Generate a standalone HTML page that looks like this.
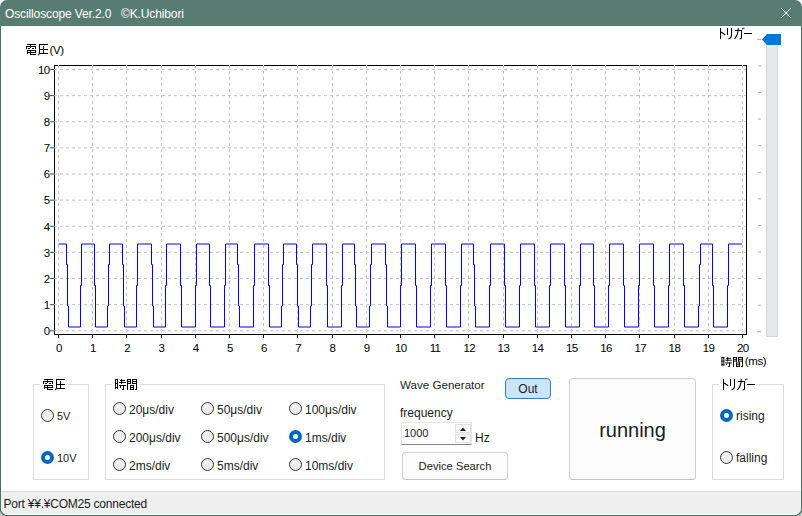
<!DOCTYPE html>
<html><head><meta charset="utf-8">
<style>
*{margin:0;padding:0;box-sizing:border-box}
html,body{width:802px;height:516px;overflow:hidden;background:#fff}
body{position:relative;font-family:"Liberation Sans", sans-serif;font-size:12px;color:#1c1c1c}
.abs{position:absolute}
.txt{position:absolute;white-space:pre;line-height:14px;height:14px}
#win{position:absolute;left:0;top:0;width:802px;height:516px;background:#587c71;border-radius:7px}
#client{position:absolute;left:1px;top:26px;width:800px;height:489px;background:#fff;border-radius:0 0 7px 7px;overflow:hidden}
#status{position:absolute;left:0;top:465px;width:800px;height:24px;background:#efefef;border-top:1px solid #dadada;border-bottom:1px solid #f8f8f8}
.gb{position:absolute;border:1px solid #dcdcdc}
.radio{position:absolute;width:13px;height:13px;border-radius:50%;border:1px solid #333;background:#efefef}
.radio.on{border:none;background:#0067c0}
.radio.on::after{content:"";position:absolute;left:4px;top:4px;width:5px;height:5px;border-radius:50%;background:#fff}
.btn{position:absolute;border:1px solid #d0d0d0;border-bottom-color:#c0c0c0;border-radius:4px;background:#fdfdfd}
</style></head><body>
<div class="abs" style="left:0;top:500px;width:16px;height:16px;background:#c8c8c8"></div>
<div class="abs" style="left:786px;top:500px;width:16px;height:16px;background:#c8c8c8"></div>
<div id="win">
  <div class="txt" style="left:5px;top:6.5px;color:#fff;font-size:12px;letter-spacing:-0.12px">Oscilloscope Ver.2.0   ©K.Uchibori</div>
</div>
<div class="abs" style="left:0;top:26px;width:802px;height:490px;background:#4b7365;border-radius:0 0 7px 7px"></div>
<div id="client">
  <div id="status"><div class="txt" style="left:2.5px;top:5px;font-size:12px;letter-spacing:-0.22px">Port ¥¥.¥COM25 connected</div></div>
</div>

<div class="gb" style="left:33px;top:384px;width:56px;height:96px"></div>
<div class="gb" style="left:105px;top:384px;width:280px;height:96px"></div>
<div class="gb" style="left:712px;top:384px;width:72px;height:96px"></div>
<div class="abs" style="left:40px;top:380px;width:28px;height:10px;background:#fff"></div>
<div class="abs" style="left:112px;top:380px;width:28px;height:10px;background:#fff"></div>
<div class="abs" style="left:719px;top:380px;width:38px;height:10px;background:#fff"></div>

<div class="radio" style="left:41px;top:409px"></div><div class="txt" style="left:57px;top:409px;font-size:11px">5V</div>
<div class="radio on" style="left:41px;top:451px"></div><div class="txt" style="left:57px;top:451px;font-size:11px">10V</div>

<div class="radio" style="left:113px;top:402px"></div><div class="txt" style="left:129px;top:403px">20μs/div</div>
<div class="radio" style="left:113px;top:430px"></div><div class="txt" style="left:129px;top:431px">200μs/div</div>
<div class="radio" style="left:113px;top:458px"></div><div class="txt" style="left:129px;top:459px">2ms/div</div>
<div class="radio" style="left:201px;top:402px"></div><div class="txt" style="left:217px;top:403px">50μs/div</div>
<div class="radio" style="left:201px;top:430px"></div><div class="txt" style="left:217px;top:431px">500μs/div</div>
<div class="radio" style="left:201px;top:458px"></div><div class="txt" style="left:217px;top:459px">5ms/div</div>
<div class="radio" style="left:289px;top:402px"></div><div class="txt" style="left:305px;top:403px">100μs/div</div>
<div class="radio on" style="left:289px;top:430px"></div><div class="txt" style="left:305px;top:431px">1ms/div</div>
<div class="radio" style="left:289px;top:458px"></div><div class="txt" style="left:305px;top:459px">10ms/div</div>

<div class="radio on" style="left:720px;top:409px"></div><div class="txt" style="left:736px;top:409px">rising</div>
<div class="radio" style="left:720px;top:451px"></div><div class="txt" style="left:736px;top:451px">falling</div>

<div class="txt" style="left:400px;top:378px;font-size:11.6px">Wave Generator</div>
<div class="abs" style="left:505px;top:378px;width:46px;height:21px;border:1px solid #2f7cc2;border-radius:4px;background:#cce4f7"></div>
<div class="txt" style="left:505px;top:382px;width:46px;text-align:center">Out</div>
<div class="txt" style="left:400px;top:406px">frequency</div>
<div class="abs" style="left:401px;top:422px;width:71px;height:23px;border:1px solid #e5e5e5;border-bottom:1px solid #868686;background:#fff"></div>
<div class="txt" style="left:404px;top:426px;font-size:11px">1000</div>
<div class="abs" style="left:455px;top:424px;width:16px;height:9px;border:1px solid #e0e0e0;background:#fcfcfc"></div>
<div class="abs" style="left:455px;top:434px;width:16px;height:9px;border:1px solid #e0e0e0;background:#fcfcfc"></div>
<div class="txt" style="left:475px;top:431px">Hz</div>
<div class="btn" style="left:402px;top:452px;width:106px;height:28px"></div>
<div class="txt" style="left:402px;top:459px;width:106px;text-align:center;font-size:11.2px">Device Search</div>

<div class="btn" style="left:569px;top:378px;width:127px;height:102px"></div>
<div class="txt" style="left:569px;top:419px;width:127px;text-align:center;font-size:20px;line-height:22px;height:22px">running</div>

<svg class="abs" style="left:0;top:0" width="802" height="516" viewBox="0 0 802 516">
  <path d="M781,8L791,18M791,8L781,18" stroke="#fff" stroke-width="0.9" fill="none"/>
  <path d="M460,431L463,427.5L466,431Z M460,437L463,440.5L466,437Z" fill="#222"/>
  <path d="M54.5,65.5H746.5V334.5H54.5Z" stroke="#000" stroke-width="1" fill="none" shape-rendering="crispEdges"/>
  <g stroke="#c2c2c2" stroke-width="1" stroke-dasharray="3,3" fill="none">
  <line x1="58.5" y1="65" x2="58.5" y2="334" />
<line x1="92.5" y1="65" x2="92.5" y2="334" />
<line x1="126.5" y1="65" x2="126.5" y2="334" />
<line x1="161.5" y1="65" x2="161.5" y2="334" />
<line x1="195.5" y1="65" x2="195.5" y2="334" />
<line x1="229.5" y1="65" x2="229.5" y2="334" />
<line x1="263.5" y1="65" x2="263.5" y2="334" />
<line x1="297.5" y1="65" x2="297.5" y2="334" />
<line x1="332.5" y1="65" x2="332.5" y2="334" />
<line x1="366.5" y1="65" x2="366.5" y2="334" />
<line x1="400.5" y1="65" x2="400.5" y2="334" />
<line x1="434.5" y1="65" x2="434.5" y2="334" />
<line x1="468.5" y1="65" x2="468.5" y2="334" />
<line x1="503.5" y1="65" x2="503.5" y2="334" />
<line x1="537.5" y1="65" x2="537.5" y2="334" />
<line x1="571.5" y1="65" x2="571.5" y2="334" />
<line x1="605.5" y1="65" x2="605.5" y2="334" />
<line x1="639.5" y1="65" x2="639.5" y2="334" />
<line x1="674.5" y1="65" x2="674.5" y2="334" />
<line x1="708.5" y1="65" x2="708.5" y2="334" />
<line x1="742.5" y1="65" x2="742.5" y2="334" />
  </g>
  <g stroke="#c2c2c2" stroke-width="1" stroke-dasharray="3,3" fill="none">
  <line x1="54" y1="330.80" x2="746" y2="330.80" />
<line x1="54" y1="304.67" x2="746" y2="304.67" />
<line x1="54" y1="278.54" x2="746" y2="278.54" />
<line x1="54" y1="252.41" x2="746" y2="252.41" />
<line x1="54" y1="226.28" x2="746" y2="226.28" />
<line x1="54" y1="200.15" x2="746" y2="200.15" />
<line x1="54" y1="174.02" x2="746" y2="174.02" />
<line x1="54" y1="147.89" x2="746" y2="147.89" />
<line x1="54" y1="121.76" x2="746" y2="121.76" />
<line x1="54" y1="95.63" x2="746" y2="95.63" />
<line x1="54" y1="69.50" x2="746" y2="69.50" />
  </g>
  <g stroke="#000" stroke-width="1" shape-rendering="crispEdges">
  <line x1="58.5" y1="335" x2="58.5" y2="338" />
<line x1="92.5" y1="335" x2="92.5" y2="338" />
<line x1="126.5" y1="335" x2="126.5" y2="338" />
<line x1="161.5" y1="335" x2="161.5" y2="338" />
<line x1="195.5" y1="335" x2="195.5" y2="338" />
<line x1="229.5" y1="335" x2="229.5" y2="338" />
<line x1="263.5" y1="335" x2="263.5" y2="338" />
<line x1="297.5" y1="335" x2="297.5" y2="338" />
<line x1="332.5" y1="335" x2="332.5" y2="338" />
<line x1="366.5" y1="335" x2="366.5" y2="338" />
<line x1="400.5" y1="335" x2="400.5" y2="338" />
<line x1="434.5" y1="335" x2="434.5" y2="338" />
<line x1="468.5" y1="335" x2="468.5" y2="338" />
<line x1="503.5" y1="335" x2="503.5" y2="338" />
<line x1="537.5" y1="335" x2="537.5" y2="338" />
<line x1="571.5" y1="335" x2="571.5" y2="338" />
<line x1="605.5" y1="335" x2="605.5" y2="338" />
<line x1="639.5" y1="335" x2="639.5" y2="338" />
<line x1="674.5" y1="335" x2="674.5" y2="338" />
<line x1="708.5" y1="335" x2="708.5" y2="338" />
<line x1="742.5" y1="335" x2="742.5" y2="338" />
  </g>
  <g stroke="#444" stroke-width="1">
  <line x1="50" y1="330.80" x2="54" y2="330.80" />
<line x1="50" y1="304.67" x2="54" y2="304.67" />
<line x1="50" y1="278.54" x2="54" y2="278.54" />
<line x1="50" y1="252.41" x2="54" y2="252.41" />
<line x1="50" y1="226.28" x2="54" y2="226.28" />
<line x1="50" y1="200.15" x2="54" y2="200.15" />
<line x1="50" y1="174.02" x2="54" y2="174.02" />
<line x1="50" y1="147.89" x2="54" y2="147.89" />
<line x1="50" y1="121.76" x2="54" y2="121.76" />
<line x1="50" y1="95.63" x2="54" y2="95.63" />
<line x1="50" y1="69.50" x2="54" y2="69.50" />
  </g>
  <g font-family='"Liberation Sans", sans-serif' font-size="11.5px" fill="#000">
  <text x="58.8" y="352" text-anchor="middle" letter-spacing="-0.6">0</text>
<text x="93.0" y="352" text-anchor="middle" letter-spacing="-0.6">1</text>
<text x="127.2" y="352" text-anchor="middle" letter-spacing="-0.6">2</text>
<text x="161.4" y="352" text-anchor="middle" letter-spacing="-0.6">3</text>
<text x="195.6" y="352" text-anchor="middle" letter-spacing="-0.6">4</text>
<text x="229.8" y="352" text-anchor="middle" letter-spacing="-0.6">5</text>
<text x="264.0" y="352" text-anchor="middle" letter-spacing="-0.6">6</text>
<text x="298.2" y="352" text-anchor="middle" letter-spacing="-0.6">7</text>
<text x="332.4" y="352" text-anchor="middle" letter-spacing="-0.6">8</text>
<text x="366.6" y="352" text-anchor="middle" letter-spacing="-0.6">9</text>
<text x="400.8" y="352" text-anchor="middle" letter-spacing="-0.6">10</text>
<text x="435.0" y="352" text-anchor="middle" letter-spacing="-0.6">11</text>
<text x="469.2" y="352" text-anchor="middle" letter-spacing="-0.6">12</text>
<text x="503.4" y="352" text-anchor="middle" letter-spacing="-0.6">13</text>
<text x="537.6" y="352" text-anchor="middle" letter-spacing="-0.6">14</text>
<text x="571.8" y="352" text-anchor="middle" letter-spacing="-0.6">15</text>
<text x="606.0" y="352" text-anchor="middle" letter-spacing="-0.6">16</text>
<text x="640.2" y="352" text-anchor="middle" letter-spacing="-0.6">17</text>
<text x="674.4" y="352" text-anchor="middle" letter-spacing="-0.6">18</text>
<text x="708.6" y="352" text-anchor="middle" letter-spacing="-0.6">19</text>
<text x="742.8" y="352" text-anchor="middle" letter-spacing="-0.6">20</text>
<text x="49.6" y="335.0" text-anchor="end" letter-spacing="-0.6">0</text>
<text x="49.6" y="308.9" text-anchor="end" letter-spacing="-0.6">1</text>
<text x="49.6" y="282.7" text-anchor="end" letter-spacing="-0.6">2</text>
<text x="49.6" y="256.6" text-anchor="end" letter-spacing="-0.6">3</text>
<text x="49.6" y="230.5" text-anchor="end" letter-spacing="-0.6">4</text>
<text x="49.6" y="204.3" text-anchor="end" letter-spacing="-0.6">5</text>
<text x="49.6" y="178.2" text-anchor="end" letter-spacing="-0.6">6</text>
<text x="49.6" y="152.1" text-anchor="end" letter-spacing="-0.6">7</text>
<text x="49.6" y="126.0" text-anchor="end" letter-spacing="-0.6">8</text>
<text x="49.6" y="99.8" text-anchor="end" letter-spacing="-0.6">9</text>
<text x="49.6" y="73.7" text-anchor="end" letter-spacing="-0.6">10</text>
  </g>
  <path d="M58.5,244.0H66.5V264.5H67.5V306H68.5V327.0H80.5V285.5H81.5V244.0H94.5V285.5H95.5V327.0H107.5V306H108.5V264.5H109.5V244.0H122.5V264.5H123.5V306H124.5V327.0H136.5V285.5H137.5V244.0H151.5V264.5H152.5V306H153.5V327.0H165.5V285.5H166.5V244.0H180.5V285.5H181.5V327.0H195.5V285.5H196.5V244.0H209.5V285.5H210.5V327.0H224.5V285.5H225.5V244.0H237.5V264.5H238.5V306H239.5V327.0H253.5V285.5H254.5V244.0H268.5V285.5H269.5V327.0H281.5V306H282.5V264.5H283.5V244.0H296.5V264.5H297.5V306H298.5V327.0H310.5V306H311.5V264.5H312.5V244.0H326.5V285.5H327.5V327.0H341.5V285.5H342.5V244.0H354.5V264.5H355.5V306H356.5V327.0H369.5V306H370.5V264.5H371.5V244.0H385.5V264.5H386.5V306H387.5V327.0H400.5V285.5H401.5V244.0H415.5V285.5H416.5V327.0H430.5V285.5H431.5V244.0H445.5V285.5H446.5V327.0H460.5V285.5H461.5V244.0H473.5V264.5H474.5V306H475.5V327.0H489.5V285.5H490.5V244.0H504.5V285.5H505.5V327.0H519.5V285.5H520.5V244.0H534.5V285.5H535.5V327.0H549.5V285.5H550.5V244.0H564.5V285.5H565.5V327.0H579.5V285.5H580.5V244.0H593.5V285.5H594.5V327.0H608.5V285.5H609.5V244.0H623.5V285.5H624.5V327.0H638.5V285.5H639.5V244.0H653.5V285.5H654.5V327.0H668.5V285.5H669.5V244.0H683.5V285.5H684.5V327.0H698.5V306H699.5V264.5H700.5V244.0H712.5V285.5H713.5V327.0H727.5V285.5H728.5V244.0H742" fill="none" stroke="#0000ff" stroke-width="1"/>
  <g stroke="#a8a8a8" stroke-width="1">
  <line x1="757" y1="39.30" x2="761" y2="39.30" />
<line x1="758" y1="65.89" x2="761" y2="65.89" />
<line x1="758" y1="92.48" x2="761" y2="92.48" />
<line x1="758" y1="119.07" x2="761" y2="119.07" />
<line x1="758" y1="145.66" x2="761" y2="145.66" />
<line x1="758" y1="172.25" x2="761" y2="172.25" />
<line x1="758" y1="198.84" x2="761" y2="198.84" />
<line x1="758" y1="225.43" x2="761" y2="225.43" />
<line x1="758" y1="252.02" x2="761" y2="252.02" />
<line x1="758" y1="278.61" x2="761" y2="278.61" />
<line x1="758" y1="305.20" x2="761" y2="305.20" />
<line x1="757" y1="331.79" x2="761" y2="331.79" />
  </g>
  <rect x="766.5" y="44.5" width="11" height="292" fill="#e6e8e9" stroke="#d6d6d6" shape-rendering="crispEdges"/>
  <path d="M762,39.5L767,34H781V45H767Z" fill="#0078d4"/>
  <g fill="#000">
    <g transform="translate(26,44) scale(1.0,1.0)"><rect x="1" y="0" width="9" height="1"/><rect x="0" y="2" width="10" height="1"/><rect x="0" y="2" width="1" height="3"/><rect x="9" y="2" width="1" height="3"/><rect x="4" y="0" width="1" height="4"/><rect x="2" y="4" width="2" height="1"/><rect x="6" y="4" width="2" height="1"/><rect x="1" y="6" width="9" height="1"/><rect x="1" y="6" width="1" height="4"/><rect x="9" y="6" width="1" height="3"/><rect x="1" y="8" width="9" height="1"/><rect x="4" y="6" width="1" height="5"/><rect x="4" y="10" width="6" height="1"/></g><g transform="translate(38,44) scale(1.0,1.0)"><rect x="1" y="0" width="9" height="1"/><rect x="1" y="0" width="1" height="9"/><rect x="5" y="2" width="1" height="8"/><rect x="2" y="5" width="8" height="1"/><rect x="2" y="9" width="8" height="1"/><path d="M1.5,8.5Q1.5,10.2 0,11" fill="none" stroke="#000" stroke-width="1.1"/></g>
    <g transform="translate(720,28) scale(1.0,1.0)"><rect x="0" y="0" width="1" height="11"/><path d="M1,4L5.2,6.8" fill="none" stroke="#000" stroke-width="1.1"/></g><g transform="translate(727,28) scale(1.0,1.0)"><rect x="0" y="0" width="1" height="7"/><rect x="4" y="0" width="1" height="8"/><path d="M4.5,7.5Q4.3,10 1.5,11" fill="none" stroke="#000" stroke-width="1.1"/></g><g transform="translate(734,28) scale(1.0,1.0)"><rect x="1" y="2" width="7" height="1"/><rect x="7" y="2" width="1" height="8"/><path d="M4.3,0Q4.3,6.5 0.5,11 M7.5,9.5Q7.5,11 5.5,11 M8.3,0.2L8.8,1.2 M9.6,-0.3L10.1,0.7" fill="none" stroke="#000" stroke-width="1.1"/></g><g transform="translate(744,28) scale(1.0,1.0)"><rect x="0" y="5" width="8" height="1"/></g>
    <g transform="translate(114,379) scale(1.0,1.0)"><rect x="1" y="0" width="1" height="10"/><rect x="3" y="0" width="1" height="10"/><rect x="1" y="0" width="3" height="1"/><rect x="1" y="4" width="3" height="1"/><rect x="1" y="8" width="3" height="1"/><rect x="7" y="0" width="1" height="5"/><rect x="6" y="1" width="5" height="1"/><rect x="5" y="3" width="7" height="1"/><rect x="5" y="6" width="7" height="1"/><rect x="9" y="6" width="1" height="4"/><rect x="8" y="10" width="2" height="1"/><rect x="6" y="7" width="1" height="2"/></g><g transform="translate(127,379) scale(1.0,1.0)"><rect x="0" y="0" width="1" height="11"/><rect x="0" y="0" width="4" height="1"/><rect x="0" y="2" width="4" height="1"/><rect x="0" y="4" width="4" height="1"/><rect x="3" y="0" width="1" height="5"/><rect x="5" y="0" width="5" height="1"/><rect x="5" y="2" width="5" height="1"/><rect x="5" y="4" width="5" height="1"/><rect x="5" y="0" width="1" height="5"/><rect x="9" y="0" width="1" height="10"/><rect x="8" y="10" width="2" height="1"/><rect x="3" y="6" width="4" height="1"/><rect x="3" y="8" width="4" height="1"/><rect x="3" y="10" width="4" height="1"/><rect x="3" y="6" width="1" height="5"/><rect x="6" y="6" width="1" height="5"/></g>
    <g transform="translate(43,379) scale(1.0,1.0)"><rect x="1" y="0" width="9" height="1"/><rect x="0" y="2" width="10" height="1"/><rect x="0" y="2" width="1" height="3"/><rect x="9" y="2" width="1" height="3"/><rect x="4" y="0" width="1" height="4"/><rect x="2" y="4" width="2" height="1"/><rect x="6" y="4" width="2" height="1"/><rect x="1" y="6" width="9" height="1"/><rect x="1" y="6" width="1" height="4"/><rect x="9" y="6" width="1" height="3"/><rect x="1" y="8" width="9" height="1"/><rect x="4" y="6" width="1" height="5"/><rect x="4" y="10" width="6" height="1"/></g><g transform="translate(55,379) scale(1.0,1.0)"><rect x="1" y="0" width="9" height="1"/><rect x="1" y="0" width="1" height="9"/><rect x="5" y="2" width="1" height="8"/><rect x="2" y="5" width="8" height="1"/><rect x="2" y="9" width="8" height="1"/><path d="M1.5,8.5Q1.5,10.2 0,11" fill="none" stroke="#000" stroke-width="1.1"/></g>
    <g transform="translate(723,379) scale(1.0,1.0)"><rect x="0" y="0" width="1" height="11"/><path d="M1,4L5.2,6.8" fill="none" stroke="#000" stroke-width="1.1"/></g><g transform="translate(730,379) scale(1.0,1.0)"><rect x="0" y="0" width="1" height="7"/><rect x="4" y="0" width="1" height="8"/><path d="M4.5,7.5Q4.3,10 1.5,11" fill="none" stroke="#000" stroke-width="1.1"/></g><g transform="translate(737,379) scale(1.0,1.0)"><rect x="1" y="2" width="7" height="1"/><rect x="7" y="2" width="1" height="8"/><path d="M4.3,0Q4.3,6.5 0.5,11 M7.5,9.5Q7.5,11 5.5,11 M8.3,0.2L8.8,1.2 M9.6,-0.3L10.1,0.7" fill="none" stroke="#000" stroke-width="1.1"/></g><g transform="translate(747,379) scale(1.0,1.0)"><rect x="0" y="5" width="8" height="1"/></g>
    <g transform="translate(720.5,357) scale(0.95,0.91)"><rect x="1" y="0" width="1" height="10"/><rect x="3" y="0" width="1" height="10"/><rect x="1" y="0" width="3" height="1"/><rect x="1" y="4" width="3" height="1"/><rect x="1" y="8" width="3" height="1"/><rect x="7" y="0" width="1" height="5"/><rect x="6" y="1" width="5" height="1"/><rect x="5" y="3" width="7" height="1"/><rect x="5" y="6" width="7" height="1"/><rect x="9" y="6" width="1" height="4"/><rect x="8" y="10" width="2" height="1"/><rect x="6" y="7" width="1" height="2"/></g><g transform="translate(733,357) scale(1.0,0.91)"><rect x="0" y="0" width="1" height="11"/><rect x="0" y="0" width="4" height="1"/><rect x="0" y="2" width="4" height="1"/><rect x="0" y="4" width="4" height="1"/><rect x="3" y="0" width="1" height="5"/><rect x="5" y="0" width="5" height="1"/><rect x="5" y="2" width="5" height="1"/><rect x="5" y="4" width="5" height="1"/><rect x="5" y="0" width="1" height="5"/><rect x="9" y="0" width="1" height="10"/><rect x="8" y="10" width="2" height="1"/><rect x="3" y="6" width="4" height="1"/><rect x="3" y="8" width="4" height="1"/><rect x="3" y="10" width="4" height="1"/><rect x="3" y="6" width="1" height="5"/><rect x="6" y="6" width="1" height="5"/></g>
  </g>
  <g font-family='"Liberation Sans", sans-serif' font-size="12px" fill="#000">
    <text x="49.6" y="53.6" font-size="11.5px" letter-spacing="-0.45">(V)</text>
    <text x="744.8" y="365" font-size="11.5px" letter-spacing="-0.4">(ms)</text>
  </g>
</svg>
</body></html>
